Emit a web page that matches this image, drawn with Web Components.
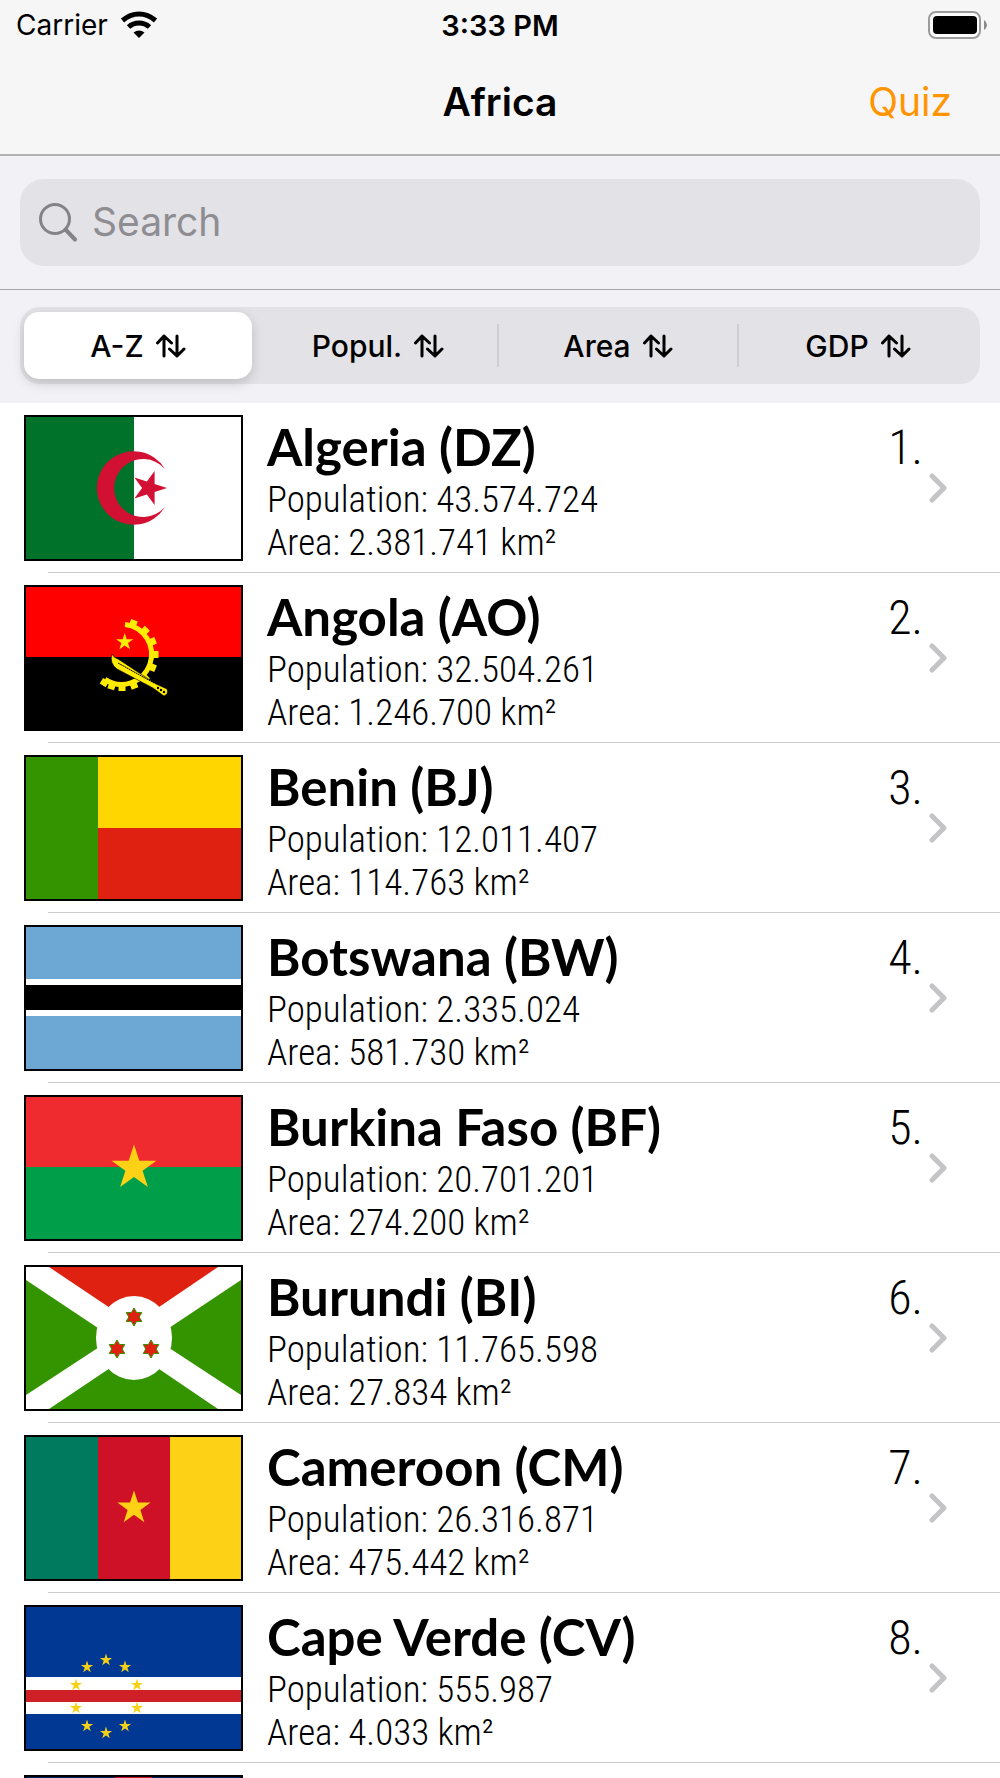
<!DOCTYPE html>
<html lang="en">
<head>
<meta charset="utf-8">
<meta name="viewport" content="width=device-width, initial-scale=1">
<title>Africa</title>
<style>
  body {
    margin: 0;
    color: #000;
    background: #fff;
    font-family: Inter, "Liberation Sans", sans-serif;
  }
</style>
</head>
<body>

<country-app>
  <status-bar slot="header" time="3:33 PM">Carrier</status-bar>
  <nav-bar slot="header">Africa<a slot="action" href="#quiz">Quiz</a></nav-bar>
  <search-field slot="tools" label="Search"></search-field>
  <sort-bar slot="tools" options="A-Z,Popul.,Area,GDP"></sort-bar>

  <country-row flag="dz" rank="1." population="43.574.724" area="2.381.741">Algeria (DZ)</country-row>
  <country-row flag="ao" rank="2." population="32.504.261" area="1.246.700">Angola (AO)</country-row>
  <country-row flag="bj" rank="3." population="12.011.407" area="114.763">Benin (BJ)</country-row>
  <country-row flag="bw" rank="4." population="2.335.024" area="581.730">Botswana (BW)</country-row>
  <country-row flag="bf" rank="5." population="20.701.201" area="274.200">Burkina Faso (BF)</country-row>
  <country-row flag="bi" rank="6." population="11.765.598" area="27.834">Burundi (BI)</country-row>
  <country-row flag="cm" rank="7." population="26.316.871" area="475.442">Cameroon (CM)</country-row>
  <country-row flag="cv" rank="8." population="555.987" area="4.033">Cape Verde (CV)</country-row>
  <country-row flag="cf"></country-row>
</country-app>

<script>
const define = (name, html, setup) => {
  const template = document.createElement("template");
  template.innerHTML = html;

  customElements.define(
    name,
    class extends HTMLElement {
      constructor() {
        super();
        this.attachShadow({ mode: "open" }).appendChild(
          template.content.cloneNode(true),
        );
      }

      connectedCallback() {
        if (setup) setup(this, this.shadowRoot);
      }
    },
  );
};

// points of a star, first tip at `turn` degrees (-90 is up)
const star = (cx, cy, r, attrs, turn = -90, tips = 5, inner = 0.382) => {
  const points = [];
  for (let i = 0; i < tips * 2; i++) {
    const angle = ((turn + (i * 180) / tips) * Math.PI) / 180;
    const radius = i % 2 ? r * inner : r;
    points.push(
      (cx + radius * Math.cos(angle)).toFixed(1) +
        "," +
        (cy + radius * Math.sin(angle)).toFixed(1),
    );
  }
  return `<polygon points="${points.join(" ")}" ${attrs}/>`;
};

const rect = (x, y, w, h, fill) =>
  `<rect x="${x}" y="${y}" width="${w}" height="${h}" fill="${fill}"/>`;

const tooth = (angle) =>
  `<rect x="126" y="64" width="6.5" height="7" transform="rotate(${angle} 96 67.5)"/>`;

const burundiStar = (x, y) =>
  star(x, y, 9, 'fill="#de2110" stroke="#339400"', -90, 6, 0.58);

// all drawn on a 215x142 field
const flags = {
  dz:
    rect(0, 0, 108, 142, "#007229") +
    rect(108, 0, 107, 142, "#fff") +
    '<path d="M139 52A36.7 36.7 0 1 0 139 90A29 29 0 1 1 139 52Z" fill="#d21034"/>' +
    star(123, 71, 18, 'fill="#d21034"', 0),
  ao:
    rect(0, 0, 215, 70, "#f00") +
    rect(0, 70, 215, 72, "#000") +
    '<g fill="#ffec00"><path d="M99 37.5A30 30 0 1 1 79 92.300" fill="none" stroke="#ffec00" stroke-width="5"/>' +
    [-70, -46, -23, 0, 23, 46, 69, 90, 108, 122].map(tooth).join("") +
    star(98.7, 55, 9, "") +
    '<path d="M86 67Q83 76 91 82L127 101L138 109Q143 107 141 102L130 97L92 72Q88 71 86 67Z" stroke="#000" stroke-width=".6"/></g>' +
    '<path d="M92 76L128 96" stroke="#000" stroke-dasharray="2 .5"/>' +
    '<g><circle cx="132" cy="101" r="1.2"/><circle cx="135" cy="103" r="1.2"/><circle cx="138" cy="105" r="1.2"/></g>',
  bj:
    rect(0, 0, 72, 142, "#339400") +
    rect(72, 0, 143, 71, "#ffd600") +
    rect(72, 71, 143, 71, "#de2110"),
  bw:
    rect(0, 0, 215, 142, "#6da8d5") +
    rect(0, 52, 215, 37, "#fff") +
    rect(0, 58, 215, 25, "#000"),
  bf:
    rect(0, 0, 215, 71, "#f02b2f") +
    rect(0, 70, 215, 72, "#009e49") +
    star(108, 71, 23.6, 'fill="#fcd116"'),
  bi:
    rect(0, 0, 215, 142, "#fff") +
    '<path d="M23 0H192L108 57Z" fill="#de2110"/>' +
    '<path d="M23 142H192L108 85ZM0 13V128L87 71ZM215 13V128L128 71Z" fill="#339400"/>' +
    '<ellipse cx="108" cy="71" rx="38" ry="42" fill="#fff"/>' +
    burundiStar(108, 50) +
    burundiStar(91, 82) +
    burundiStar(125, 82),
  cm:
    rect(0, 0, 72, 142, "#007a5e") +
    rect(72, 0, 72, 142, "#ce1126") +
    rect(144, 0, 71, 142, "#fcd116") +
    star(108, 71, 17.5, 'fill="#fcd116"'),
  cv:
    rect(0, 0, 215, 142, "#003893") +
    rect(0, 70, 215, 37, "#fff") +
    rect(0, 83, 215, 12, "#cf2027") +
    [
      [80, 53], [61, 60], [99, 60], [50, 78], [111, 78],
      [50, 101], [111, 101], [61, 119], [99, 119], [80, 126],
    ]
      .map(([x, y]) => star(x, y, 6.4, 'fill="#f7d116"'))
      .join(""),
  cf: rect(0, 0, 215, 142, "#002664") + rect(89, 0, 37, 142, "#ce1126"),
};

define(
  "country-app",
  `
  <style>
    :host {
      display: flex;
      flex-direction: column;
      height: 100vh;
    }
    header {
      background: #f6f6f6;
      border-bottom: 2px solid #b2b2b4;
    }
    .tools {
      background: #f2f1f6;
    }
    main {
      flex: 1;
      min-height: 0;
      overflow-y: auto;
      scrollbar-width: none;
    }
  </style>
  <header><slot name="header"></slot></header>
  <div class="tools"><slot name="tools"></slot></div>
  <main><slot></slot></main>
`,
);

define(
  "status-bar",
  `
  <style>
    :host {
      display: grid;
      grid-template-columns: 1fr auto 1fr;
      align-items: center;
      height: 50px;
      padding: 0 12px 0 16px;
      font-size: 28px;
    }
    .carrier {
      display: flex;
      align-items: center;
      gap: 12px;
    }
    .time {
      padding-right: 4px;
      font-size: 29px;
      font-weight: 600;
    }
    .battery {
      justify-self: end;
    }
    svg {
      display: block;
    }
  </style>
  <div class="carrier">
    <slot></slot>
    <svg width="38" height="28" viewBox="0 0 38 28" aria-hidden="true">
      <g fill="none" stroke="#000" stroke-width="5">
        <path d="M2.5 9.5Q10 3 19 3T35.500 9.500"/>
        <path d="M8.500 16Q13 12 19 12T29.500 16"/>
      </g>
      <path d="M13.500 21.500Q19 17.500 24.500 21.500L19 27Z"/>
    </svg>
  </div>
  <div class="time"></div>
  <svg class="battery" width="60" height="28" viewBox="0 0 60 28" aria-hidden="true">
    <rect x="1" y="1" width="51" height="26" rx="7" fill="#fcfcfc" stroke="#9b9b9b" stroke-width="2"/>
    <rect x="5" y="5" width="44" height="18" rx="4"/>
    <path d="M56 9Q59 11 59 14T56 19Z" fill="#8a8a8a"/>
  </svg>
`,
  (host, root) => {
    root.querySelector(".time").textContent = host.getAttribute("time");
  },
);

define(
  "nav-bar",
  `
  <style>
    :host {
      display: grid;
      grid-template-columns: 1fr auto 1fr;
      align-items: center;
      height: 102px;
      padding: 0 48px 2px;
      font-size: 39px;
    }
    h1 {
      grid-column: 2;
      margin: 0;
      font-size: 39px;
      font-weight: 600;
    }
    ::slotted(a) {
      justify-self: end;
      color: #ff9500;
      text-decoration: none;
    }
  </style>
  <h1><slot></slot></h1>
  <slot name="action"></slot>
`,
);

define(
  "search-field",
  `
  <style>
    :host {
      display: block;
      padding: 23px 20px;
      border-bottom: 1px solid #a6a6aa;
    }
    label {
      display: flex;
      align-items: center;
      gap: 14px;
      height: 87px;
      padding: 0 18px;
      border-radius: 24px;
      background: #e3e2e7;
    }
    input {
      flex: 1;
      min-width: 0;
      padding: 0 0 2px;
      border: 0;
      outline: 0;
      background: none;
      font: inherit;
      font-size: 39px;
    }
    input::placeholder {
      color: #8e8d92;
      opacity: 1;
    }
  </style>
  <label>
    <svg width="40" height="40" viewBox="0 0 40 40" fill="none" stroke="#838287" stroke-linecap="round" aria-hidden="true">
      <circle cx="17" cy="16" r="14.500" stroke-width="3"/>
      <path d="M27.500 26.500L37 36.500" stroke-width="4"/>
    </svg>
    <input type="search">
  </label>
`,
  (host, root) => {
    const input = root.querySelector("input");
    input.placeholder = host.getAttribute("label");
    input.setAttribute("aria-label", host.getAttribute("label"));
  },
);

define(
  "sort-bar",
  `
  <style>
    :host {
      display: block;
      padding: 17px 20px 19px;
    }
    #track {
      display: flex;
      align-items: center;
      height: 67px;
      padding: 5px 8px 5px 4px;
      border-radius: 20px;
      background: #e3e2e7;
    }
    button {
      flex: 1 1 0;
      display: flex;
      align-items: center;
      justify-content: center;
      gap: 12px;
      height: 100%;
      padding: 0;
      border: 0;
      border-radius: 15px;
      background: none;
      color: #000;
      font: inherit;
      font-size: 30px;
      font-weight: 500;
    }
    button[aria-pressed="true"] {
      background: #fff;
      box-shadow: 0 4px 12px #0000002b;
    }
    i {
      width: 2px;
      height: 43px;
      margin: 0 5px;
      background: #cfced4;
    }
    button[aria-pressed="true"] + i {
      background: none;
    }
  </style>
  <div id="track" role="group" aria-label="Sort by"></div>
`,
  (host, root) => {
    const track = root.querySelector("#track");

    track.innerHTML = host
      .getAttribute("options")
      .split(",")
      .map(
        (option, i) => `<button type="button" aria-pressed="${i === 0}">${option}
          <svg width="30" height="24" viewBox="0 0 30 24" fill="none" stroke="#000" stroke-width="3" stroke-linecap="round" stroke-linejoin="round" aria-hidden="true">
            <path d="M8 2V22M1.500 9L8 2L15.500 9M21 2V22M13.500 15L21 22L28 15"/>
          </svg></button>`,
      )
      .join("<i></i>");

    track.addEventListener("click", (event) => {
      const clicked = event.target.closest("button");
      if (!clicked) return;
      for (const button of track.querySelectorAll("button")) {
        button.setAttribute("aria-pressed", button === clicked);
      }
    });
  },
);

define(
  "country-row",
  `
  <style>
    :host {
      display: block;
    }
    a {
      display: flex;
      height: 146px;
      padding: 12px 50px 11px 24px;
      color: inherit;
      text-decoration: none;
    }
    #flag {
      flex: none;
      box-sizing: border-box;
      width: 219px;
      height: 146px;
      border: 2px solid #000;
    }
    #text {
      flex: 1;
      min-width: 0;
      padding-left: 24px;
    }
    h2 {
      margin: 0;
      font: 700 51px/63px "Avenir Next", Lato, sans-serif;
    }
    p {
      margin: 0;
      font: 300 37px/43px "Avenir Next Condensed", "Roboto Condensed", "Liberation Sans Narrow", sans-serif;
      white-space: nowrap;
    }
    #rank {
      padding-right: 5px;
      font: 300 48px/66px "Avenir Next Condensed", "Roboto Condensed", "Liberation Sans Narrow", sans-serif;
    }
    #chevron {
      align-self: center;
    }
    #line {
      height: 1px;
      margin-left: 48px;
      background: #cbcbcd;
    }
  </style>
  <a href="#">
    <svg id="flag" viewBox="0 0 215 142" aria-hidden="true"></svg>
    <div id="text">
      <h2><slot></slot></h2>
      <p id="population"></p>
      <p id="area"></p>
    </div>
    <div id="rank"></div>
    <svg id="chevron" width="22" height="30" viewBox="0 0 22 30" fill="none" stroke="#c4c4c6" stroke-width="5" stroke-linecap="round" stroke-linejoin="round" aria-hidden="true">
      <path d="M4 3L16 15L4 27"/>
    </svg>
  </a>
  <div id="line"></div>
`,
  (host, root) => {
    const flag = host.getAttribute("flag");
    root.querySelector("#flag").innerHTML = flags[flag];
    root.querySelector("a").href = "#" + flag;

    if (!host.hasAttribute("rank")) return;
    root.querySelector("#rank").textContent = host.getAttribute("rank");
    root.querySelector("#population").textContent =
      "Population: " + host.getAttribute("population");
    root.querySelector("#area").textContent =
      "Area: " + host.getAttribute("area") + " km²";
  },
);
</script>
</body>
</html>
